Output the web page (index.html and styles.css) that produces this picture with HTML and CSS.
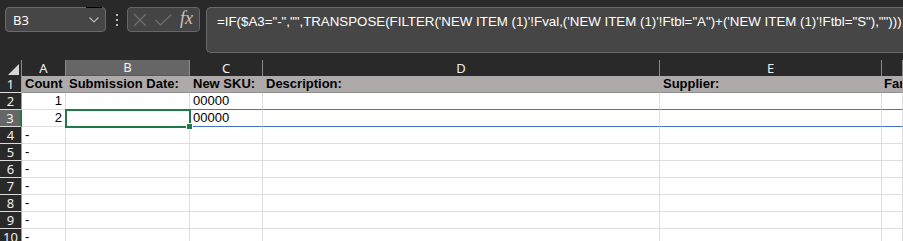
FILE: index.html
```html
<!DOCTYPE html>
<html lang="en">
<head>
  <meta charset="UTF-8" />
  <title>Sheet</title>
  <link rel="stylesheet" href="styles.css">
</head>
<body>
  <div class="toolbar">
    <div class="name-box">
      <span class="name-mark"></span>
      <span>B3</span>
      <svg class="chevron" width="10" height="6" viewBox="0 0 10 6"><path d="M0.5 0.5 L5 5 L9.5 0.5" fill="none" stroke="#b8b8b8" stroke-width="1.2"/></svg>
    </div>
    <div class="dots"><i></i><i></i><i></i></div>
    <div class="fx-buttons">
      <svg width="14" height="14" viewBox="0 0 14 14"><path d="M1 1 L13 13 M13 1 L1 13" stroke="#6f6f6f" stroke-width="1.2"/></svg>
      <svg width="17" height="12" viewBox="0 0 17 12"><path d="M0.5 6 L5.5 11 L16.5 0.5" fill="none" stroke="#6f6f6f" stroke-width="1.2"/></svg>
      <span class="fx">fx</span>
    </div>
    <div class="formula-bar">=IF($A3="-","",TRANSPOSE(FILTER('NEW ITEM (1)'!Fval,('NEW ITEM (1)'!Ftbl="A")+('NEW ITEM (1)'!Ftbl="S"),"")))</div>
  </div>

  <div class="sheet">
    <div class="row col-heads">
      <div class="corner"><svg width="11" height="11" viewBox="0 0 11 11"><path d="M11 0 L11 11 L0 11 Z" fill="#d6d6d6"/></svg></div>
      <div class="ch">A</div>
      <div class="ch active">B</div>
      <div class="ch">C</div>
      <div class="ch">D</div>
      <div class="ch">E</div>
      <div class="ch"></div>
    </div>

    <div class="row head-row">
      <div class="rh">1</div>
      <div class="c">Count</div>
      <div class="c">Submission Date:</div>
      <div class="c">New SKU:</div>
      <div class="c">Description:</div>
      <div class="c">Supplier:</div>
      <div class="c">Far</div>
    </div>

    <div class="row">
      <div class="rh">2</div>
      <div class="c num">1</div>
      <div class="c"></div>
      <div class="c blue">00000</div>
      <div class="c blue"></div>
      <div class="c blue"></div>
      <div class="c blue"></div>
    </div>

    <div class="row">
      <div class="rh active">3</div>
      <div class="c num">2</div>
      <div class="c"></div>
      <div class="c blue">00000</div>
      <div class="c blue"></div>
      <div class="c blue"></div>
      <div class="c blue"></div>
    </div>

    <div class="row"><div class="rh">4</div><div class="c">-</div><div class="c"></div><div class="c"></div><div class="c"></div><div class="c"></div><div class="c"></div></div>
    <div class="row"><div class="rh">5</div><div class="c">-</div><div class="c"></div><div class="c"></div><div class="c"></div><div class="c"></div><div class="c"></div></div>
    <div class="row"><div class="rh">6</div><div class="c">-</div><div class="c"></div><div class="c"></div><div class="c"></div><div class="c"></div><div class="c"></div></div>
    <div class="row"><div class="rh">7</div><div class="c">-</div><div class="c"></div><div class="c"></div><div class="c"></div><div class="c"></div><div class="c"></div></div>
    <div class="row"><div class="rh">8</div><div class="c">-</div><div class="c"></div><div class="c"></div><div class="c"></div><div class="c"></div><div class="c"></div></div>
    <div class="row"><div class="rh">9</div><div class="c">-</div><div class="c"></div><div class="c"></div><div class="c"></div><div class="c"></div><div class="c"></div></div>
    <div class="row"><div class="rh">10</div><div class="c">-</div><div class="c"></div><div class="c"></div><div class="c"></div><div class="c"></div><div class="c"></div></div>

    <!-- active cell B3 -->
    <div class="selection"><span class="handle"></span></div>
  </div>
</body>
</html>
```

FILE: styles.css
```css
body {
  margin: 0;
  background: #292929;
  overflow: hidden;
  font-family: "Liberation Sans", Arial, sans-serif;
}

/* formula toolbar */
.toolbar {
  height: 60px;
  display: flex;
  align-items: flex-start;
  padding: 7px 0 0 5px;
  box-sizing: border-box;
  background: #292929;
}

.name-box {
  position: relative;
  width: 101px;
  height: 25px;
  box-sizing: border-box;
  border: 1px solid #6a6a6a;
  border-radius: 4px;
  background: #464646;
  color: #fff;
  font-family: "Noto Sans", sans-serif;
  font-size: 13px;
  display: flex;
  align-items: center;
  justify-content: space-between;
  padding: 0 6px 0 7px;
}

.name-mark {
  position: absolute;
  top: -1px;
  right: 3px;
  width: 16px;
  height: 1px;
  background: #000;
}

.chevron {
  margin-top: 1px;
}

.dots {
  width: 21px;
  display: flex;
  flex-direction: column;
  align-items: center;
  gap: 3px;
  padding-top: 7px;
}

.dots i {
  width: 2px;
  height: 2px;
  background: #b8b8b8;
}

.fx-buttons {
  width: 73px;
  height: 25px;
  box-sizing: border-box;
  border: 1px solid #666;
  border-radius: 4px;
  background: #444;
  display: flex;
  align-items: center;
  gap: 8px;
  padding: 0 0 0 5px;
}

.fx {
  font-family: "Liberation Serif", serif;
  font-style: italic;
  font-size: 18px;
  color: #c4c4c4;
  margin-top: -3px;
}

.formula-bar {
  flex: 1;
  height: 46px;
  margin-left: 6px;
  box-sizing: border-box;
  border: 1px solid #6a6a6a;
  border-right: none;
  border-radius: 5px 0 0 5px;
  background: #464646;
  color: #fff;
  font-size: 13.3px;
  padding: 6px 0 0 10px;
  white-space: nowrap;
  overflow: hidden;
}

/* grid */
.sheet {
  position: relative;
  background: #fff;
}

.row {
  display: grid;
  grid-template-columns: 22px 44px 124px 73px 397px 222px 1fr;
  height: 17px;
}

.col-heads {
  height: 16px;
  background: #292929;
}

.corner {
  display: flex;
  justify-content: flex-end;
  align-items: flex-end;
  padding: 0 2px 2px 0;
  border-right: 1px solid #8a8a8a;
}

.ch {
  color: #f0f0f0;
  font-family: "Noto Sans", sans-serif;
  font-size: 13px;
  line-height: 16px;
  text-align: center;
  border-right: 1px solid #8a8a8a;
}

.ch.active {
  background: #666;
  border-bottom: 2px solid #1f7a47;
  line-height: 15px;
}

.rh {
  background: #292929;
  color: #f0f0f0;
  font-family: "Noto Sans", sans-serif;
  font-size: 13px;
  line-height: 16px;
  text-align: center;
  border-bottom: 1px solid #dcdcdc;
  border-right: 1px solid #9a9a9a;
}

.rh.active {
  background: #666;
  border-right: 2px solid #1f7a47;
}

.c {
  color: #000;
  font-size: 13px;
  line-height: 16px;
  padding-left: 3px;
  white-space: nowrap;
  overflow: hidden;
  border-right: 1px solid #dedede;
  border-bottom: 1px solid #dedede;
}

.c.num {
  text-align: right;
  padding: 0 3px 0 0;
}

.c.blue {
  border-bottom-color: #4472c4;
}

.head-row .c {
  background: #aeaaaa;
  font-weight: bold;
  border-right-color: #aeaaaa;
  border-bottom-color: #8e8e8e;
}

.head-row .c:last-child {
  padding-left: 2px;
}

.selection {
  position: absolute;
  left: 65px;
  top: 49px;
  width: 126px;
  height: 19px;
  box-sizing: border-box;
  border: 2px solid #1f7a47;
}

.handle {
  position: absolute;
  right: -4px;
  bottom: -4px;
  width: 5px;
  height: 5px;
  background: #1f7a47;
  border: 1px solid #fff;
}
```
